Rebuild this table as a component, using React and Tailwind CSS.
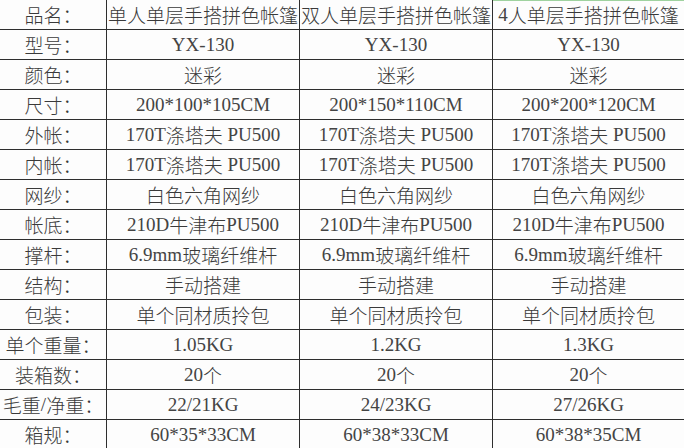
import React from "react";

const columns = ["单人单层手搭拼色帐篷", "双人单层手搭拼色帐篷", "4人单层手搭拼色帐篷"];

const rows = [
  ["型号：", "YX-130", "YX-130", "YX-130"],
  ["颜色：", "迷彩", "迷彩", "迷彩"],
  ["尺寸：", "200*100*105CM", "200*150*110CM", "200*200*120CM"],
  ["外帐：", "170T涤塔夫 PU500", "170T涤塔夫 PU500", "170T涤塔夫 PU500"],
  ["内帐：", "170T涤塔夫 PU500", "170T涤塔夫 PU500", "170T涤塔夫 PU500"],
  ["网纱：", "白色六角网纱", "白色六角网纱", "白色六角网纱"],
  ["帐底：", "210D牛津布PU500", "210D牛津布PU500", "210D牛津布PU500"],
  ["撑杆：", "6.9mm玻璃纤维杆", "6.9mm玻璃纤维杆", "6.9mm玻璃纤维杆"],
  ["结构：", "手动搭建", "手动搭建", "手动搭建"],
  ["包装：", "单个同材质拎包", "单个同材质拎包", "单个同材质拎包"],
  ["单个重量：", "1.05KG", "1.2KG", "1.3KG"],
  ["装箱数：", "20个", "20个", "20个"],
  ["毛重/净重：", "22/21KG", "24/23KG", "27/26KG"],
  ["箱规：", "60*35*33CM", "60*38*33CM", "60*38*35CM"],
];

// latin runs in a serif face, CJK in the sans fallback
function Text({ value }) {
  const parts = value.match(/[\x20-\x7e]+|[^\x20-\x7e]+/g) || [];
  return parts.map((part, i) =>
    /^[\x20-\x7e]+$/.test(part) ? (
      <span
        key={i}
        className="whitespace-pre font-normal text-[#444]"
        style={{ fontFamily: '"Liberation Serif", serif' }}
      >
        {part}
      </span>
    ) : (
      <span key={i}>{part}</span>
    )
  );
}

function Cell({ children, last, green }) {
  return (
    <div
      className={
        "flex h-[30px] items-center justify-center whitespace-nowrap border-b border-[#2e2e2e] leading-none " +
        (last ? "" : "border-r ") +
        (green ? "shadow-[inset_0_1px_0_#9fd29f]" : "")
      }
    >
      {children}
    </div>
  );
}

export default function App() {
  const all = [["品名：", ...columns], ...rows];
  return (
    <div
      className="h-[448px] w-[684px] overflow-hidden bg-[#fdfdfd] text-[19px] font-light text-[#3a3a3a]"
      style={{ fontFamily: '"Noto Sans CJK SC", sans-serif' }}
    >
      <div className="grid grid-cols-[107px_193px_193px_1fr]">
        {all.map((row, r) =>
          row.map((text, c) => (
            <Cell key={r + "-" + c} last={c === 3} green={r === 0 && c === 3}>
              <Text value={text} />
            </Cell>
          ))
        )}
      </div>
    </div>
  );
}
